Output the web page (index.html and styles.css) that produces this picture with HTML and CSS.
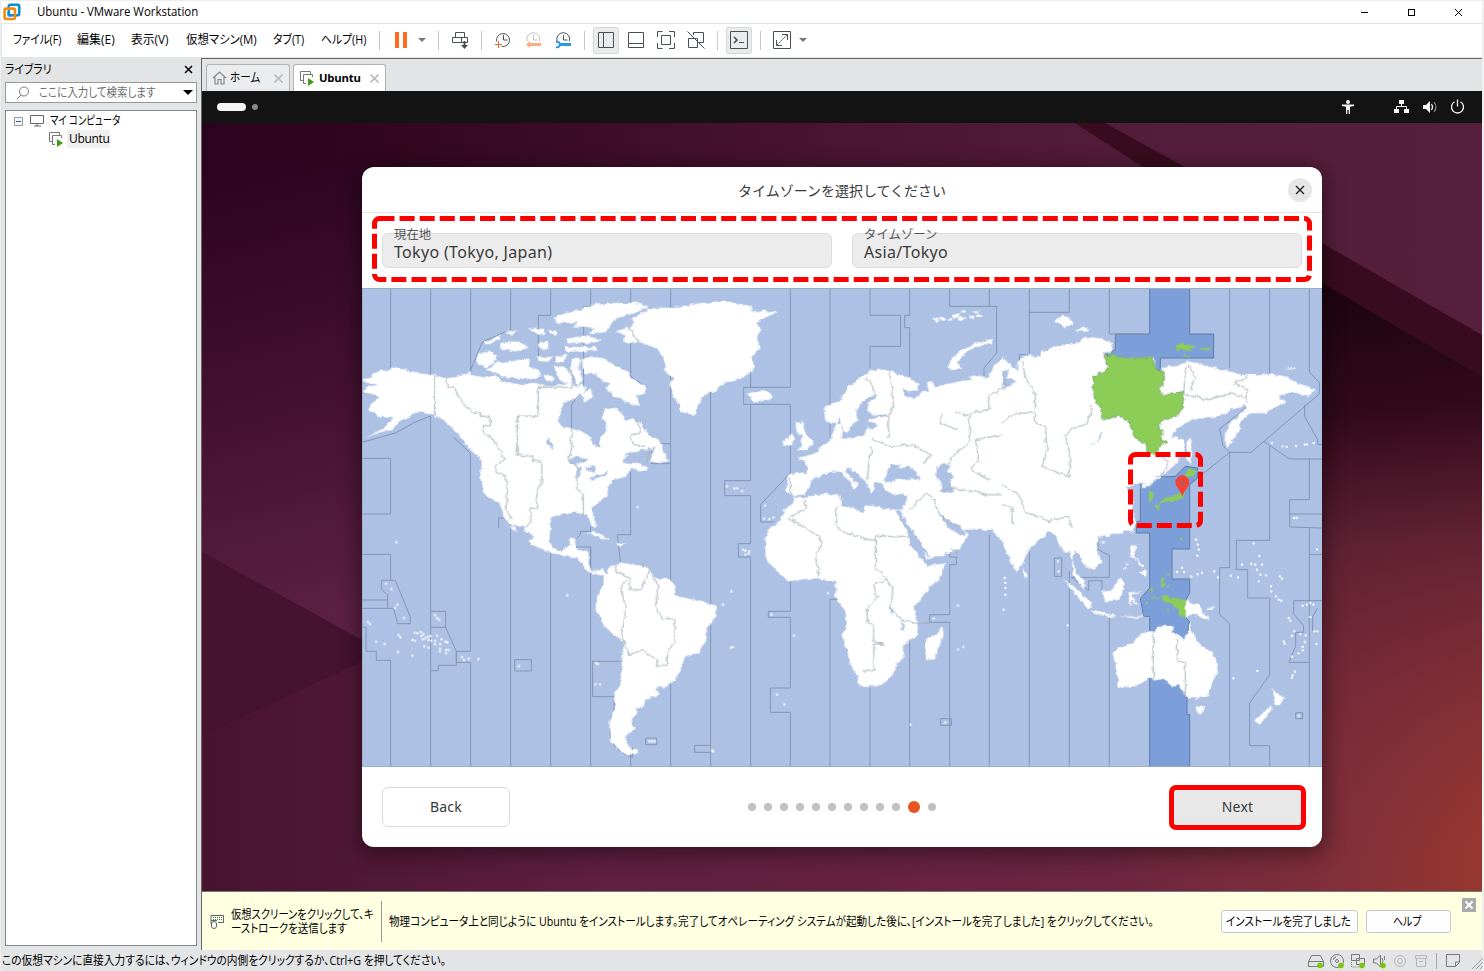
FILE: index.html
```html
<!DOCTYPE html>
<html lang="ja">
<head>
<meta charset="utf-8">
<title>Ubuntu - VMware Workstation</title>
<link rel="stylesheet" href="styles.css">
</head>
<body>
<div class="window">
  <header class="titlebar">
    <svg class="logo" width="18" height="18" viewBox="0 0 18 18" fill="none" stroke-width="2.6"><rect x="5.8" y="1.8" width="10.4" height="10.4" rx="1.5" stroke="#0b8fd0"/><rect x="1.6" y="5.6" width="10.4" height="10.4" rx="1.5" stroke="#f08c10"/><path d="M5.8 9V12.2H9" stroke="#0b8fd0"/></svg>
    <span class="t t-title">Ubuntu - VMware Workstation</span>
    <svg class="winbtns" width="110" height="22" fill="none" stroke="#000" shape-rendering="crispEdges"><path d="M1 11.5h7"/><rect x="48.5" y="8.5" width="6" height="6"/><path shape-rendering="auto" d="M95 8l7 7M102 8l-7 7"/></svg>
  </header>
  <nav class="menubar">
    <div class="menus">
      <span class="slot m1"><span class="t">ファイル(F)</span></span>
      <span class="slot m2"><span class="t">編集(E)</span></span>
      <span class="slot m3"><span class="t">表示(V)</span></span>
      <span class="slot m4"><span class="t">仮想マシン(M)</span></span>
      <span class="slot m5"><span class="t">タブ(T)</span></span>
      <span class="slot m6"><span class="t">ヘルプ(H)</span></span>
    </div>
    <svg class="tools" width="450" height="33" viewBox="370 24 450 33" fill="none" stroke="#4a4f53">
      <path stroke="#c8c8c8" d="M379.5 31v19M438.5 31v19M481.5 31v19M584.5 31v19M717.5 31v19M760.5 31v19"/>
      <path fill="#ff6a1f" stroke="none" d="M395 32h4v16h-4zM403 32h4v16h-4z"/>
      <path fill="#777" stroke="none" d="M418 38h8l-4 4zM799 38h8l-4 4z"/>
      <path d="M455.500 37.500v-5h9v5M452.500 37.500h15v5h-15zM461.500 37.500v5"/><path stroke-width="2" d="M464.500 41v5"/><path fill="#4a4f53" stroke="none" d="M461 45h7l-3.500 4z"/>
      <path d="M496.700 41.500a6.500 6.500 0 1 1 5 4.900M503.500 35v5h4"/><path stroke="#ff6a1f" d="M495 44.500h7M498.500 41v7"/>
      <g stroke="#c2c2c2"><path d="M527 41a6.500 6.500 0 1 1 12.500 0M533.500 35v5h4"/></g><path fill="#ffad84" stroke="none" d="M526 44.500l4-3.500v2h11v3h-11v2z"/>
      <path d="M557 41a6.500 6.500 0 1 1 12.500 0M563.500 35v5h4"/><path stroke="#279bdc" stroke-width="3" d="M560 44.500h11"/><path stroke="#279bdc" stroke-width="2" d="M556 42c5-2 5 7 0 5"/>
      <rect x="593.500" y="27.500" width="25" height="26" rx="2" fill="#eaebec" stroke="#d5d7d8"/><path d="M598.500 32.500h15v15h-15zM603.500 32.500v15"/>
      <path d="M628.500 32.500h15v15h-15zM628.500 43.500h15"/>
      <path d="M657.500 37v-5.500h5M669 31.500h5.500V37M674.500 43v5.500H669M662.500 48.500h-5V43M661.500 35.500h9v9h-9z"/>
      <path stroke="#425066" d="M693.500 35v-2.500h10v10h-6M688.500 38.500h9v9h-9zM687.500 31.500l17 17"/>
      <rect x="726.500" y="27.500" width="25" height="26" rx="2" fill="#eaebec" stroke="#d5d7d8"/><path d="M730.500 31.500h17v17h-17zM739 42.500h5"/><path stroke-width="1.600" d="M734 37l3 3-3 3"/>
      <path d="M773.500 31.500h17v17h-17zM782 34.500h5.500v5.500M776.500 40v5.500h5.500"/><path stroke-dasharray="2 1" d="M777 45l10-10"/>
    </svg>
  </nav>
  <div class="main">
    <aside class="library">
      <div class="lib-head"><span class="slot"><span class="t t-lib">ライブラリ</span></span><svg width="9" height="9" stroke="#000" stroke-width="1.500"><path d="M1 1l7 7M8 1l-7 7"/></svg></div>
      <div class="search"><svg width="14" height="14" fill="none" stroke="#777"><circle cx="8" cy="5.500" r="4.500"/><path d="M5 9l-4 4"/></svg><span class="slot"><span class="t t-search">ここに入力して検索します</span></span><i class="caret"></i></div>
      <div class="tree">
        <div class="row"><svg width="9" height="9" fill="#f5f5f5" stroke="#999"><path d="M.5.5h8v8h-8z"/><path stroke="#3355bb" d="M2 4.500h5"/></svg><svg class="pc" width="15" height="12" fill="none" stroke="#666"><path d="M.5.5h13v8H.5zM7 9v2M4 11h7"/></svg><span class="slot"><span class="t t-pc">マイ コンピュータ</span></span></div>
        <div class="row vm"><svg width="15" height="15" fill="none" stroke="#777"><path d="M3 9.500H.5v-9h10V3M6 12.500H3.500v-9h9V6"/><path fill="#3f9c14" stroke="none" d="M8 7l6 4-6 4z"/></svg><span class="vmname">Ubuntu</span></div>
      </div>
    </aside>
    <section class="work">
      <div class="tabs">
        <div class="tab"><svg width="15" height="14" fill="none" stroke="#888" stroke-width="1.200"><path d="M1 7l6.500-6L14 7M3 6v7h3V8.500h3V13h3V6"/></svg><span class="slot"><span class="t t-home">ホーム</span></span><svg class="x" width="9" height="9"><path d="M0.500 0.500l8 8M8.500.5l-8 8"/></svg></div>
        <div class="tab active"><svg width="15" height="15" fill="none" stroke="#777"><path d="M3 9.500H.5v-9h10V3M6 12.500H3.500v-9h9V6"/><path fill="#3f9c14" stroke="none" d="M8 7l6 4-6 4z"/></svg><b>Ubuntu</b><svg class="x" width="9" height="9"><path d="M0.500 0.500l8 8M8.500.5l-8 8"/></svg></div>
      </div>
      <div class="guest">
        <div class="topbar"><i class="pill"></i><i class="dot"></i>
          <svg width="130" height="32" viewBox="1340 91 130 32" fill="#f5f5f5"><circle cx="1348" cy="102" r="2"/><path d="M1342 104.500h12v1.500l-4 .8v7.200h-1.300v-4h-1.400v4H1346v-7.200l-4-.8z"/><path d="M1399 100h5v4h-5zM1394 109h5v4h-5zM1404 109h5v4h-5z"/><path fill="none" stroke="#f5f5f5" d="M1401.500 104v3M1396.500 109v-2.500h10v2.500"/><path d="M1423 105h3l4-4v12l-4-4h-3z"/><path fill="none" stroke="#f5f5f5" stroke-width="1.200" d="M1431.500 104q2 3 0 6"/><path fill="none" stroke="#888" stroke-width="1.200" d="M1434 102q4 5 0 10"/><path fill="none" stroke="#f5f5f5" stroke-width="1.300" d="M1454.500 101.800a6 6 0 1 0 6 0M1457.500 99.500v7"/></svg>
        </div>
        <div class="desktop">
          <svg class="wall" width="1280" height="768" viewBox="202 123 1280 768">
            <defs>
              <linearGradient id="wt" x1="0" x2="1"><stop offset="0" stop-color="#2a031e"/><stop offset=".15" stop-color="#32071f"/><stop offset=".5" stop-color="#4a1433"/><stop offset=".75" stop-color="#541d3b"/><stop offset="1" stop-color="#561f3b"/></linearGradient>
              <linearGradient id="wl" gradientUnits="userSpaceOnUse" x1="202" y1="150" x2="330" y2="640"><stop offset="0" stop-color="#2a031e"/><stop offset=".5" stop-color="#431030"/><stop offset="1" stop-color="#5e2144"/></linearGradient>
              <linearGradient id="wb" gradientUnits="userSpaceOnUse" x1="202" y1="0" x2="1482" y2="0"><stop offset="0" stop-color="#47132f"/><stop offset=".3" stop-color="#5e1e40"/><stop offset=".7" stop-color="#6b2540"/><stop offset=".875" stop-color="#7f2e3a"/><stop offset="1" stop-color="#963730"/></linearGradient>
              <linearGradient id="wr" gradientUnits="userSpaceOnUse" x1="1322" y1="290" x2="1382" y2="860"><stop offset="0" stop-color="#1d0410"/><stop offset=".22" stop-color="#31091a"/><stop offset=".45" stop-color="#5d2034" stop-opacity=".95"/><stop offset="1" stop-color="#7a2b3a" stop-opacity="0"/></linearGradient>
            </defs>
            <path fill="url(#wt)" d="M202 123h1280v768H202z"/>
            <path fill="url(#wl)" d="M202 167h200v650H202z"/>
            <path fill="#45122f" d="M202 552l160 88v22l-160 75z"/>
            <path fill="url(#wb)" d="M202 737l160-75h960V270l160 67v554H202z"/>
            <path fill="url(#wr)" d="M1322 270l160 67v554h-160z"/>
            <path fill="#380c1e" d="M1075 123h30l217 120 160 92v42L1322 283z"/>
          </svg>
          <div class="dialog">
            <div class="dlg-head"><span class="dlg-title">タイムゾーンを選択してください</span><span class="close"><svg width="10" height="10" stroke="#222" stroke-width="1.400"><path d="M1 1l8 8M9 1L1 9"/></svg></span></div>
            <div class="fields">
              <div class="field"><span class="label">現在地</span><span class="value">Tokyo (Tokyo, Japan)</span></div>
              <div class="field"><span class="label">タイムゾーン</span><span class="value">Asia/Tokyo</span></div>
            </div>
            <svg class="map" width="960" height="479" viewBox="0 0 2880 1437">
              <defs><filter id="coast" x="0" y="0" width="2880" height="1437" filterUnits="userSpaceOnUse"><feTurbulence type="fractalNoise" baseFrequency=".06" numOctaves="3" seed="4"/><feDisplacementMap in="SourceGraphic" scale="14" xChannelSelector="R" yChannelSelector="G"/></filter></defs>
              <path fill="#adc1e5" d="M0 0h2880v1437H0z"/>
              <!-- highlighted zone -->
              <g fill="#7c9fd9" stroke="#5f7ca8" stroke-width="3">
                <path d="M2363 0h120v138h72v72h-160v40l-165-50 30-15v-47h103zM2335 590l30 0 20-23 55-2 30-30 37 5v30l-24 20v193h-53v90h53v42l-11 20v55l10 10-7 70v210h8v227h-120V985h-18l-10-53 28-32V735h-40v-35h12z"/>
              </g>
              <!-- zone boundaries over the sea -->
              <g class="zone">
                <path d="M86 0v245M206 0v260M326 0v252M446 0v124l-85 38-37 88M566 0v82h-37v130M686 0v55h-21v245M806 0v50M806 160v105l50 35M926 0v60M926 240v1197M0 463l100-28 60-33 46-18v1053M0 511h86v167H0M275 448l50 48v594h-42v33h43v314M446 650v787M410 720v-30h36M566 790v647M686 777v660M629 420V350l35-50M806 550v190h-40l10 85M806 1390v47M869 527h57M890 467h36M869 490v37M0 799h86v80M86 1117v320M58 877h42l45 110v20h-38l-12-46H0M58 877v28l19 15v42M0 936h76M0 1018h12v72h31v27h43M206 970h45v48h-45M251 1018l32 72v42h-54v16h-23M458 1115h50v34h-50zM780 1120h-88v106h64v50q-40 100 55 132v-30M851 1350h33v20h-33zM638 777h48v75M655 740l-30 32M655 740v-10h31v-15"/>
                <path transform="translate(960)" d="M86 310v1127M206 60v238M325 0v298H185v51h140v206M444 0v448M564 0v82h92v93h-92v65M683 0v82h-15v37h15v148M683 540v38h35M803 0v55h141v140l-38 45v25M922 0v55M206 349v229h-78v45h78v144h-37v40h37v630M325 555l-89 95v52h40M325 880v90h-66v18h66v212h-60v73h60v164M485 880v50h-20v4h-21v503M564 1190v247M683 1055v382M803 780v27h20v23h-20v150h-60v23h60v434M775 1292h33v20h-33zM86 1372H38v21h48M564 600v50M922 740v697"/>
                <path transform="translate(1920)" d="M82 0v200H52v20M82 73h120V0M322 0v138h121M683 0v240M803 0v255M922 0v252l30 31v35L747 493h-64l-20-20-10-50 80-65M683 493 587 570M683 493v346h-30v140l30 28v430M785 460l78 53h97M908 352v33l39 70v15h13M803 475v282H703v88h34v85h66v230l-60 85v128h60v64M922 513v122h-59v82l97 3M863 678h97M922 720v717M922 800h38M960 938h-85v40l30 35v20h-24v40l-20 50h60M932 1030v-45l15-25M82 790v647M202 850v587M322 985v452M157 810h22v55h-22zM288 750v35l34 17v66H208l52 40v-30h40v30M881 1274h21v18h-21z"/>
              </g>
              <g fill="#fff" filter="url(#coast)">
                <g class="land">
                  <path d="M-5 281l25-9 28-22 37-5 10-5 35 5 30 10 55 5 40 12 45-10 25-10 10 10 35 6 30-6 20 18 30 5 30 5 40-5 30 10 50-5 30-10 15 20 15-10 12 15-17 13-15 12-35 15-10 25-7 25 12 20 40 10 40 15 15 30 17 8v-28l18-15 2-30-10-15 6-28 32-2 20 15 10 20h30l15 10 25 35 30 15v15l-30 15-50 7-30 28 20 5h30l20 10 8 10-28 5-20-10-10 12-20 18-25 5-15 20-5 25-20 20-25 20 5 30 10 22-5 10-12-14-15-25-25-10-50 5-30 10-5 42h-75l-2-18-37 0-20-23-15-40-45-30-15-50 5-45-15-25-35-30-20-30-25-25-30-25-25-10-30-5h-25l-25 20-20 5-15 25-45 10-40 17 63-35 22-25-45-5-28-20 6-20 27-20-50-15 10-15 35-5z"/>
                  <path d="M657 215l33-10 40 7 30 23 40 15 5 20 50 30-10 20-25 2 15 33-35-10-40-20-30-25 15-15-25-5-15-18-35-7-10-20zM630 210l25 0-5 30 10 30-12 28-10-30-12-25zM375 245l30-23 25 3 40-10 35 0-5 20 30 10 5 20-35 10-40-5-40-5zM350 195l35-3 20 13-10 20-25 15-30-15zM578 90l22-12 40-8 50-20 70-5 70 0 28 15-58 20-40 15-30 35 15-2-30 7h-35l20-15-40-5-30 5 20-20-30 5-35 0zM415 165l55-5 30 20-40 10-45-8zM365 163l45-20 5 8-35 18zM430 132l35-8-12 18zM610 153l60-11 48 13-28 10-75 0zM580 205l38-5-18 25-18-2zM654 320l36-20 5 25-25 15zM608 175l97 3-2 11-93 2zM500 118l45 5 5 15-22 2zM560 125l25 5 0 10-22-3zM530 165l30-3 3 18-25 8zM525 205l45 2-10 14-30-2zM575 235l30 0 25 22-5 28-30-5zM545 260l30 5-5 15-20-2zM762 130l43-14 12-15-12-6 55-33 95-7h12v315l-32-45-15-35 15-20-30-25 10-10-20-40-15-20-50-12-30 4-20-12 15-10zM870 500l20-45 15 35 15 30-30 5-25-5z"/>
                  <path transform="translate(960)" d="M-5 55l65-10 70-7 75 17 5 15 35-2 40 4-35 18-25 15 10 15-10 30 10 30-25 20 5 40-10 15-45 23-35 5-20 22-20 10-25 15-10 20-12 30-18-2-25-8zM193 318l22-6 40-4 17 14-17 16-40 2zM340 405l25-3-5 18 15 20 20 28-20 17-30 3 15-18-5-15 10-5-20-20zM305 460l25-22 7 17-12 20-22-3zM430 400l-5-40 20-10 30-15 25-35 30-30 35-22 35-6 40 13 40 15 32 20-7 15-25 5-20-10 5 25 35 5 20-20 20 5-5-35 15 5 10 10 70-15 40-5-10-13 40 3 20 5 15-35 30-30v520H265l35-35 5-25 30-20v-20l-5-5-18-10 6-35-3-17 60-3-3-30-24-15 47-12 25-23 30-20 2-30 13-15-10-5zM795 232l35-42 40-20 60-17 0 12-60 17-35 28-10 15 15 20-30 0z"/>
                  <path transform="translate(960)" d="M750 92l14-4 12 8-14 3zM772 88l18 2 2 8-12 0zM796 94l14-4 2 5-12 3zM812 80l18-2 2 10-16 2zM826 92l20-8 4 8-18 8zM834 72l16-6 4 6-12 6zM858 84l18 0 0 6-14 2zM880 82l20-4 4 5-18 5zM870 72l20-3 2 5-16 2z"/>
                  <path transform="translate(1920)" d="M-5 230l15-15 20 20 20 15-5-25 25-25 45 5 5-15 40-15 70-10 10-17 50 2 40 15v25l-30 5 15 10h25l45 5 70-2 5 32 15 10 10-15h35l40-15 60 15 40 10 70 17 50-4 60 4 60 28 38 18-23 17-45-15-40 15 25 20-35 10-30 20-50 3-20 17-10 35-20 30-15 20-7-40 22-40 45-40-5-10-40 15-50 25-60 2-40 18-35 35 40 10 5 25-30 50-40 32-50 38h-15l15-15-35 5-25 10 15 10 10 30-5 25 10 35-5 30H-5zM558 455l7-5 5 50-8 30-7-20zM155 100l30-20 20 15 15 15-30 5zM220 130l20-15 25 10-25 5zM850 242l30-4-8 7z"/>
                  <path transform="translate(0 720)" d="M490-5h75l-3 45 13 20 25 10 25-20-5-20h25l-5 30 40 15v35l10 20 35-5 5 15 15-25 35-10 75 10 25 35 45 5 15 20v25l25 8v192l-15 40-30 35-40 5 10 20-40 15-5 20-20 5v20l-20 20 13 20-28 30 10 25 30 17-30 13-30-20-25-25-5-50 20-45-5-40 20-35 5-70 5-60-50-35-35-65 5-35 20-35v-30l-40-5-25-25-15-20-35-5-45-13-45-17-20-15 15-10zM670 15l30-3 45 26-25-3-18-14zM760 45l35 2-20 8zM440-5l15 0 12 18z"/>
                  <path transform="translate(960 720)" d="M-5 205l35 10 40 5 30 15 5 25-30 40-3 40-27 35-25 7-25 18zM265-5l-15 35v60l30 35 40 35 75-10 35 5 30 5v45l30 45 5 40-15 30 5 30 15 25 5 35 20 30 5 30 15 8 55-8 30-25 15-40 20-15-3-35 43-35 3-35-13-45 45-60 30-25 20-50-55 10-10-15-40-50-5-30-15-25zM678-5l57 100 35-10 30-10 35-15 25-40-20-20-5-5zM780 295l5 25-30 75h-20l-5-20 5-45 30-10zM930-5h35v40l-25-15z"/>
                  <path transform="translate(1920 720)" d="M-5-5h145l-10 30-50 40-20 45-15 22-25-42-25-60zM62 120l15 20-9 12zM130-5h270l-30 15-40 10-40 10-5 30 13 40-23 25-30-15-10-30-15-10-10 25 15 40 25 35-5 15-30-45-10-65-20-5-20-40zM185 152l30 23 40 40 17 23-17 2-30-35zM270 248l70 14-5 5-60-9zM298 188l32-3 25-37 13 17-13 50-45 5zM380 195l40-7-30 12 20 35-18-18-7 18zM388 55l12 0-2 30 14 15-27-15zM412 135l20-10-2 25zM405 95l22 18-10 5zM365 125l20-28-15 28zM345 266l85-2-25 6zM551 218l39 12 20 30 15 18-25-8-25-12-24 7zM610 245l30-12-10 12zM332 372l18-12 45-15 15-20 30-17 15 7 10-15 25-10 25 5-7 17 37 23 10-15 7-35 13 35 20 30 45 35 10 40-20 40-10 35-35 12-30-2-20-30-10-15-15 13-20-23-50-3-40 23-50 5-5-45zM580 532l28 3-10 23-13-6zM808 480l17 15 23 13-18 27-15-7 5-15zM755 580l50-48 7 13-37 43zM295 40l12 0-5 12zM387 0l8-4-3 22z"/>
                </g>
                <g fill="#adc1e5">
                  <path d="M552 460l10-12 12 30-3 10zM620 518l20-12 40 8-15 10-40 4zM645 540l10-5 0 25-8 15zM665 535l38 0-5 20-15-5zM680 570l60-20-5 10-45 15zM700 455l10 5 0 15-12-5zM800 492l60-7 0 12-75 5zM1430 385l15 45 15 5 5-20 25-20-10-20 10-20 20-20 30-17 5 7-25 20-5 25 15 12 40-4 10 7-50 5-15 10 30 12-10 13-20-10-7 25-48 10-15 5-8-2 3-45-15-5zM1290 622l35-2 20-30 5-15 30-15 30-10h20l15 15 25 20 5 20 10-10 5-8-10-7-30-30 5-15 15 10 25 20 15 15 15 35 15-15-5-15h25l10 25 35 10h30l-2 20-13 25h-45l-45-15-20 5-5 17-40-12-25-5-10-35-45-2-80 12zM1565 580l10-35 15-15 25-2-5 12 35-5 15 15 15 25-25-3-40 3-25 7zM1725 540l25-15 18 10-13 13 20 17-10 15 10 35-35-3-5-32-13-20zM1600 668l12 0 95 145-15-10-48-55zM1730 675l30 25 35 12 15 25-15 5-15-10-25-18zM1582 950l7 5 6 28-8-8zM1618 1000l5 0 3 30-7-6zM1920 250l20-5-5 25 30 10-25 10-15 15zM2175 475l25-10 20-33v13l-25 25z"/>
                </g>
                <g fill="#8ccd58" stroke="#67926a" stroke-width="2">
                  <path d="M2225 205l15-5 20 5 45 5 65-2 10 32 25 10 3 25-18 30 15 20 25-10 35-5v25l-5 25-15 25-45 10-10 30 15 10-10 20 25 7-25 8-15 28-20-3-10-30-25-10-15-25-10-30-35-18-45 13v-25l-28-45 3-60 45-25z"/>
                </g>
                <path fill="#8ccd58" d="M2465 560l20-20 20 10-15 15-20 3zM2465 575l5 25-5 30-35 10-40 5 20-15 25-5 25-15zM2380 650l18-2-8 20zM2358 608l17 4 3 20-18 8zM2440 172l25-5 38 9-22 10-38 0zM2515 180l35 2-6 5-28-2zM2465 200l25 7-25 2zM2398 920l22 8 20 4 31 3v53l-21-6 0-22-30-15-15-3zM2368 927l22 0-3 4-20 0zM2365 900l8 0-2 20zM2398 870l8 0 0 28-10-2zM2235 192l12 4-5 5z"/>
              <g class="borders">
                <path d="M217 262v118M255 272v25l20 0 15 30 40 48h25v10h30v28h-21v22l30 20 35 60-28 15v20l34 20v60l-4 35 22 30M529 384V298h103v-35l-30-30M529 384h-63v118l48 2v12l25 4 0 60-15 30v50h-18v40l-16 22M629 420l0 60-10 40 25 10v70l20 20v64M825 390l10 45-30 10 10 25 35 5M800 115l30 50M860 480l-5 45M761 830l0 20 42 20v35l35 0 25-60-25-20M870 860l20 35-10 60 20 35 38 3 0 70-20 30-5 40h-30l5-15-45-30-45 12-20-60 15-80-10-30-5-40 15-15"/>
                <path d="M1510 270l20 15 5 30M1580 250l10 40 5 60-15 30 0 70M1530 450l50 25 70-5 55 30-20 30M1530 480l-10 50-5 50M1780 372l40 10 5 80-50 40-15 20v20M1740 375l-5 30 50 20M1820 375l60-10v-40l50-30 0-25M1920 440l-80 15 10 60-25 30 60 30M1285 570v45M1330 635l0 25-50 30 90 55 10 20-20 40 10 60M1425 655l-5 55 20 20 100 30M1540 745h100M1540 745v90l35 40-40 15 10 40-30 30v40l20 10v50l30 8-30 0v80h-30M1575 880l20 15-10 60 30 40 45 10h45M1640 670l50-55 20 10 25 60 55 30M1735 610l40-10 60 10 45 10 40 0M1765 780l20 10v30"/>
                <path d="M1920 405l40-30h60v30l30 10 5 70-15 50 80 30 5-60-15-60 20-25 40-10 20-40-5-20M1980 220l10 50 30 50v50M2475 235l-10 70 0 15 75 15 70-20 40 15M2620 285l40-20M2400 510l20 10-20 40-20 5M1920 590l50 30 20 50 70 30 60-15 10 35M1920 650l30 10 0 50M2374 1035v135M2446 1050v73h24v105M2480 230l20 40-15 35M2615 285l40 20 0 40"/>
              </g>
              </g>
              <g class="isles">
                <path d="M103 763h0M72 887h0M88 903h0M106 950h0M99 960h0M126 990h0M18 1002h0M24 1008h0M42 1061h0M68 1068h0M110 1041h0M115 1048h0M108 1092h0M151 1103h0M158 1034h0M166 1036h0M176 1032h0M184 1038h0M178 1044h0M190 1050h0M198 1046h0M206 1044h0M182 1054h0M199 1056h0M208 1058h0M220 1058h0M225 1043h0M238 1054h0M250 1061h0M256 1063h0M219 1068h0M234 1068h0M187 1075h0M200 1079h0M234 1082h0M252 1086h0M260 1086h0M234 1090h0M252 1096h0M151 1056h0M159 1058h0M219 981h0M225 990h0M232 995h0M300 1107h0M306 1116h0M320 1112h0M349 1113h0M471 1134h0M702 1125h0M708 1128h0M700 1189h0M714 1189h0M862 1360h0M870 1360h0M878 1360h0M616 922h0M827 657h0"/>
                <path transform="translate(960)" d="M135 595h0M157 601h0M166 601h0M180 609h0M249 653h0M246 692h0M262 693h0M275 688h0M183 785h0M190 788h0M201 790h0M190 800h0M200 797h0M148 910h0M123 950h0M269 980h0M336 1043h0M147 1079h0M153 1077h0M285 1220h0M307 1249h0M438 915h0M755 991h0M828 953h0M844 1077h0M828 1084h0M686 1310h0M790 1303h0M90 1387h0M94 1390h0"/>
                <path transform="translate(1920)" d="M810 465h0M842 475h0M854 477h0M882 474h0M908 470h0M915 469h0M935 465h0M876 690h0M884 690h0M582 755h0M588 770h0M590 785h0M586 803h0M525 852h0M540 840h0M546 852h0M568 865h0M587 859h0M600 855h0M637 850h0M648 868h0M687 863h0M708 868h0M755 766h0M772 804h0M748 827h0M760 830h0M765 845h0M780 830h0M775 860h0M792 862h0M720 830h0M770 880h0M834 865h0M840 872h0M807 895h0M808 910h0M822 925h0M830 935h0M838 938h0M902 953h0M915 950h0M925 945h0M934 950h0M925 987h0M860 990h0M865 998h0M937 1030h0M946 1030h0M877 1030h0M895 1038h0M911 1042h0M870 1044h0M845 1060h0M848 1067h0M908 1062h0M902 1077h0M902 1087h0M943 1068h0M890 1096h0M870 1106h0M766 1149h0M879 1151h0M872 1162h0M870 1170h0M694 1171h0M890 1284h0M197 1012h0M8 870h0M10 885h0M10 900h0M10 920h0M168 820h0M170 850h0M945 784h0M5 965h0"/>
                <path stroke="#8ccd58" d="M2457 752h0M2419 859h0M2368 902h0M2355 944h0M2418 965h0M2418 895h0"/>
              </g>
              <path fill="none" stroke="#9dabc4" stroke-width="3" d="M0 1.500h2880M0 1436h2880M1 0v1437"/>
              <path fill="#f44336" d="M2461 626c-6-20-21-30-21-43a21 21 0 0 1 42 0c0 13-15 23-21 43z"/><circle cx="2461" cy="584" r="7" fill="#b4584d"/>
            </svg>
            <div class="dlg-foot">
              <span class="btn">Back</span>
              <div class="dots"><i></i><i></i><i></i><i></i><i></i><i></i><i></i><i></i><i></i><i></i><i class="on"></i><i></i></div>
              <span class="btn next">Next</span>
            </div>
            <svg class="marks" width="960" height="680" viewBox="362 167 960 680" fill="none" stroke="#f00" stroke-width="5"><rect x="374.500" y="218.500" width="935" height="61" rx="5" stroke-dasharray="15 5.100"/><rect x="1130.500" y="454.500" width="70" height="71" rx="5" stroke-dasharray="15 5"/></svg>
          </div>
        </div>
        <div class="hint">
          <svg class="kbd" width="15" height="15" fill="none" stroke="#56686b"><path d="M1 10V1.500h12.500v7H8"/><path stroke-dasharray="1 1" d="M3 3.500h9M3 5.500h9"/><rect x="1.500" y="7.500" width="5" height="7" rx="2.500" fill="#fff"/><path d="M1 6.500h6"/></svg>
          <div class="keys"><span class="slot"><span class="t t-k1">仮想スクリーンをクリックして、キ</span></span><span class="slot"><span class="t t-k2">ーストロークを送信します</span></span></div>
          <i class="rule"></i>
          <span class="slot msg"><span class="t t-msg">物理コンピュータ上と同じように Ubuntu をインストールします。完了してオペレーティング システムが起動した後に、[インストールを完了しました] をクリックしてください。</span></span>
          <span class="wbtn done"><span class="slot"><span class="t t-done">インストールを完了しました</span></span></span>
          <span class="wbtn help"><span class="slot"><span class="t t-help">ヘルプ</span></span></span>
          <span class="hx"><svg width="14" height="14" stroke="#fff" stroke-width="2"><path d="M3.500 3.500l7 7M10.500 3.500l-7 7"/></svg></span>
        </div>
      </div>
    </section>
  </div>
  <footer class="status"><span class="slot"><span class="t t-status">この仮想マシンに直接入力するには、ウィンドウの内側をクリックするか、Ctrl+G を押してください。</span></span>
    <svg width="180" height="21" viewBox="1304 950 180 21" fill="none" stroke="#777b7e"><path d="M1311.500 955.500h9l3 6v5h-15v-5zM1308.500 961.500h15"/><circle cx="1337" cy="961" r="6.500"/><circle cx="1337" cy="961" r="1.500"/><path d="M1333 960a4 4 0 0 1 3-3"/><path d="M1351.500 954.500h8v6h-8zM1356.500 958.500h8v6h-8z"/><path stroke-dasharray="1 1" d="M1351.500 962v5h8"/><path d="M1373.500 959h3l4-4v12l-4-4h-3zM1382 958q2 3 0 6M1384.500 956v4"/><g stroke="#b5b7b9"><circle cx="1400" cy="961" r="5.500"/><circle cx="1400" cy="961" r="2.500"/><path d="M1415.500 955.500h11v3h-11zM1416.500 958.500h9v8h-9zM1419 961.500h4"/></g><path stroke="#aaa" d="M1436.500 953v16"/><path d="M1446.500 954.500h13v8l-4 4h-9zM1455.500 966v-4h4"/><path stroke="#999" d="M1472 969l11-11M1476 969l7-7M1480 969l3-3"/><g fill="#7ac70c" stroke="none"><circle cx="1320" cy="965.500" r="2.800"/><circle cx="1341" cy="965.500" r="2.800"/><circle cx="1362" cy="965.500" r="2.800"/><circle cx="1383" cy="965.500" r="2.800"/></g></svg>
  </footer>
</div>
</body>
</html>
```
FILE: styles.css
```css
* { box-sizing: border-box; }
body { margin: 0; width: 1484px; height: 971px; overflow: hidden; background: #f0f0f0; color: #000; font: 12px/16px "Open Sans", "Noto Sans CJK JP", sans-serif; }
svg { display: block; flex: none; }
i { display: block; flex: none; }
.window { display: flex; flex-direction: column; width: 1482px; height: 971px; border-left: 1px solid #eee; background: #e3e4e6; }
.t { display: inline-block; white-space: nowrap; transform-origin: 0 50%; font-feature-settings: "palt"; }
.slot { display: block; white-space: nowrap; }
.titlebar { display: flex; align-items: center; height: 24px; padding-left: 2px; background: #fff; border-top: 1px solid #eee; border-bottom: 1px solid #e3e4e6; }
.logo { margin-right: 16px; }
.winbtns { margin-left: auto; margin-right: 12px; }
.menubar { display: flex; height: 33px; background: #fff; margin-left: 1px; }
.menus { display: flex; width: 368px; padding: 8px 0 0 11px; }
.m1 { width: 64px; } .m2 { width: 54px; } .m3 { width: 55px; } .m4 { width: 87px; } .m5 { width: 48px; } .m6 { width: 49px; }
.menus .t { transform: scaleX(.9); }
.menus .m1 .t { transform: scaleX(.88); }
.menus .m2 .t { transform: scaleX(1); }
.menus .m3 .t { transform: scaleX(.98); }
.menus .m4 .t { transform: scaleX(.95); }
.main { display: flex; height: 893px; }
.library { width: 200px; padding: 0 4px 4px; display: flex; flex-direction: column; }
.lib-head { display: flex; justify-content: space-between; align-items: center; height: 25px; padding-right: 4px; }
.search { display: flex; align-items: center; width: 192px; height: 21px; border: 1px solid #999; background: #fff; padding: 0 3px 0 10px; color: #6d6d6d; }
.search svg { margin-right: 9px; }
.search .slot { width: 120px; }
.caret { margin-left: auto; border: 5px solid transparent; border-top-color: #000; border-bottom: 0; }
.tree { flex: 1; width: 192px; margin-top: 7px; border: 1px solid #828790; background: #fff; }
.row { display: flex; align-items: center; height: 18px; padding: 2px 0 0 8px; }
.pc { margin: 0 5px 0 7px; }
.row.vm { padding: 2px 0 0 43px; }
.vmname { background: #f0f0f0; margin-left: 3px; padding: 0 2px; height: 18px; line-height: 17px; width: 43px; letter-spacing: -.3px; }
.work { flex: 1; width: 1281px; border-top: 1px solid #666; border-left: 1px solid #666; margin-top: 1px; }
.tabs { display: flex; align-items: flex-end; height: 32px; padding-left: 4px; gap: 3px; }
.tab { display: flex; align-items: center; width: 84px; height: 27px; border: 1px solid #b0b2b4; border-bottom: 0; border-radius: 3px 3px 0 0; background: #ebecee; padding: 0 6px 0 5px; }
.tab .slot { margin-left: 3px; }
.tab .x { margin-left: auto; stroke: #bbb; stroke-width: 1.6; }
.tab.active { width: 93px; background: #fff; padding-left: 6px; }
.tab b { margin-left: 4px; font-size: 11.3px; letter-spacing: -.2px; }
.topbar { display: flex; align-items: center; height: 32px; background: #131313; padding-left: 15px; }
.pill { width: 29px; height: 8px; border-radius: 4px; background: #f5f5f5; }
.dot { width: 6px; height: 6px; border-radius: 3px; background: #888; margin-left: 6px; }
.topbar svg { margin-left: auto; margin-right: 12px; }
.desktop { position: relative; width: 1280px; height: 768px; padding: 44px 160px; }
.wall { position: absolute; left: 0; top: 0; }
.dialog { position: relative; width: 960px; height: 680px; border-radius: 12px; background: #fff; box-shadow: 0 4px 20px 4px rgba(0,0,0,.4); color: #3a3a3a; font-family: "Noto Sans", "Noto Sans CJK JP", sans-serif; }
.dlg-head { display: grid; grid-template-columns: 34px 1fr 34px; align-items: center; height: 46px; border-bottom: 1px solid #e4e4e4; }
.dlg-title { grid-column: 2; text-align: center; font-size: 14px; line-height: 20px; padding-top: 2px; }
.close { display: flex; align-items: center; justify-content: center; width: 24px; height: 24px; border-radius: 12px; background: #e6e6e6; }
.fields { display: flex; gap: 20px; padding: 20px 20px 0; height: 75px; }
.field { display: flex; flex-direction: column; width: 450px; height: 35px; border: 1px solid #dcdcdc; border-radius: 6px; background: #ececec; padding-left: 11px; }
.label { font-size: 12.4px; line-height: 14px; margin-top: -6px; color: #555; }
.value { font-size: 16px; line-height: 20px; letter-spacing: .32px; }
.dlg-foot { display: flex; align-items: center; justify-content: space-between; height: 80px; padding: 0 20px; }
.btn { display: flex; align-items: center; justify-content: center; width: 128px; height: 40px; border: 1px solid #d9d9d9; border-radius: 6px; font-size: 14px; letter-spacing: .2px; }
.next { width: 137px; height: 45px; margin-right: -4px; border: 5px solid #f00; background: #e8e8e8; border-radius: 7px; }
.dots { display: flex; align-items: center; gap: 8px; margin-right: -5px; }
.dots i { width: 8px; height: 8px; border-radius: 50%; background: #c1c1c1; }
.dots i.on { width: 12px; height: 12px; background: #e95420; }
.marks { position: absolute; left: 0; top: 0; }
.zone { fill: none; stroke: #8296b6; stroke-width: 3; }
.borders { fill: none; stroke: #a3b2b5; stroke-width: 3; stroke-linejoin: round; }
.isles { fill: none; stroke: #fff; stroke-width: 7; stroke-linecap: round; }
.hint { display: flex; align-items: center; width: 1280px; height: 59px; border-top: 1px solid #777; background: #ffffe1; position: relative; }
.kbd { margin: 0 7px 0 8px; }
.keys { width: 149px; line-height: 14px; padding-top: 2px; margin-left: -1px; margin-right: 1px; }
.keys .slot { width: 142px; }
.rule { width: 1px; height: 41px; background: #999; margin-right: 7px; }
.msg { width: 832px; padding-top: 2px; }
.wbtn { display: flex; align-items: center; height: 23px; border: 1px solid #c4c8d0; border-radius: 3px; background: #fdfdfd; }
.wbtn .slot { padding-top: 1px; }
.done { width: 137px; padding-left: 4px; }
.help { width: 85px; margin-left: 8px; padding-left: 26px; }
.hx { position: absolute; right: 6px; top: 6px; width: 14px; height: 14px; background: #aaa; }
.status { display: flex; height: 21px; justify-content: space-between; padding: 3px 0 0 1px; width: 1483px; }
.status svg { margin-top: -3px; }
.t-title { transform: scaleX(.952); }
.t-lib { transform: scaleX(.9); }
.t-search { transform: scaleX(.875); }
.t-pc { transform: scaleX(.78); }
.t-home { transform: scaleX(.88); }
.t-k1 { transform: scaleX(.857); }
.t-k2 { transform: scaleX(.872); }
.t-msg { transform: scaleX(.883); }
.t-done { transform: scaleX(.88); }
.t-help { transform: scaleX(.83); }
.t-status { transform: scaleX(.893); }
```
